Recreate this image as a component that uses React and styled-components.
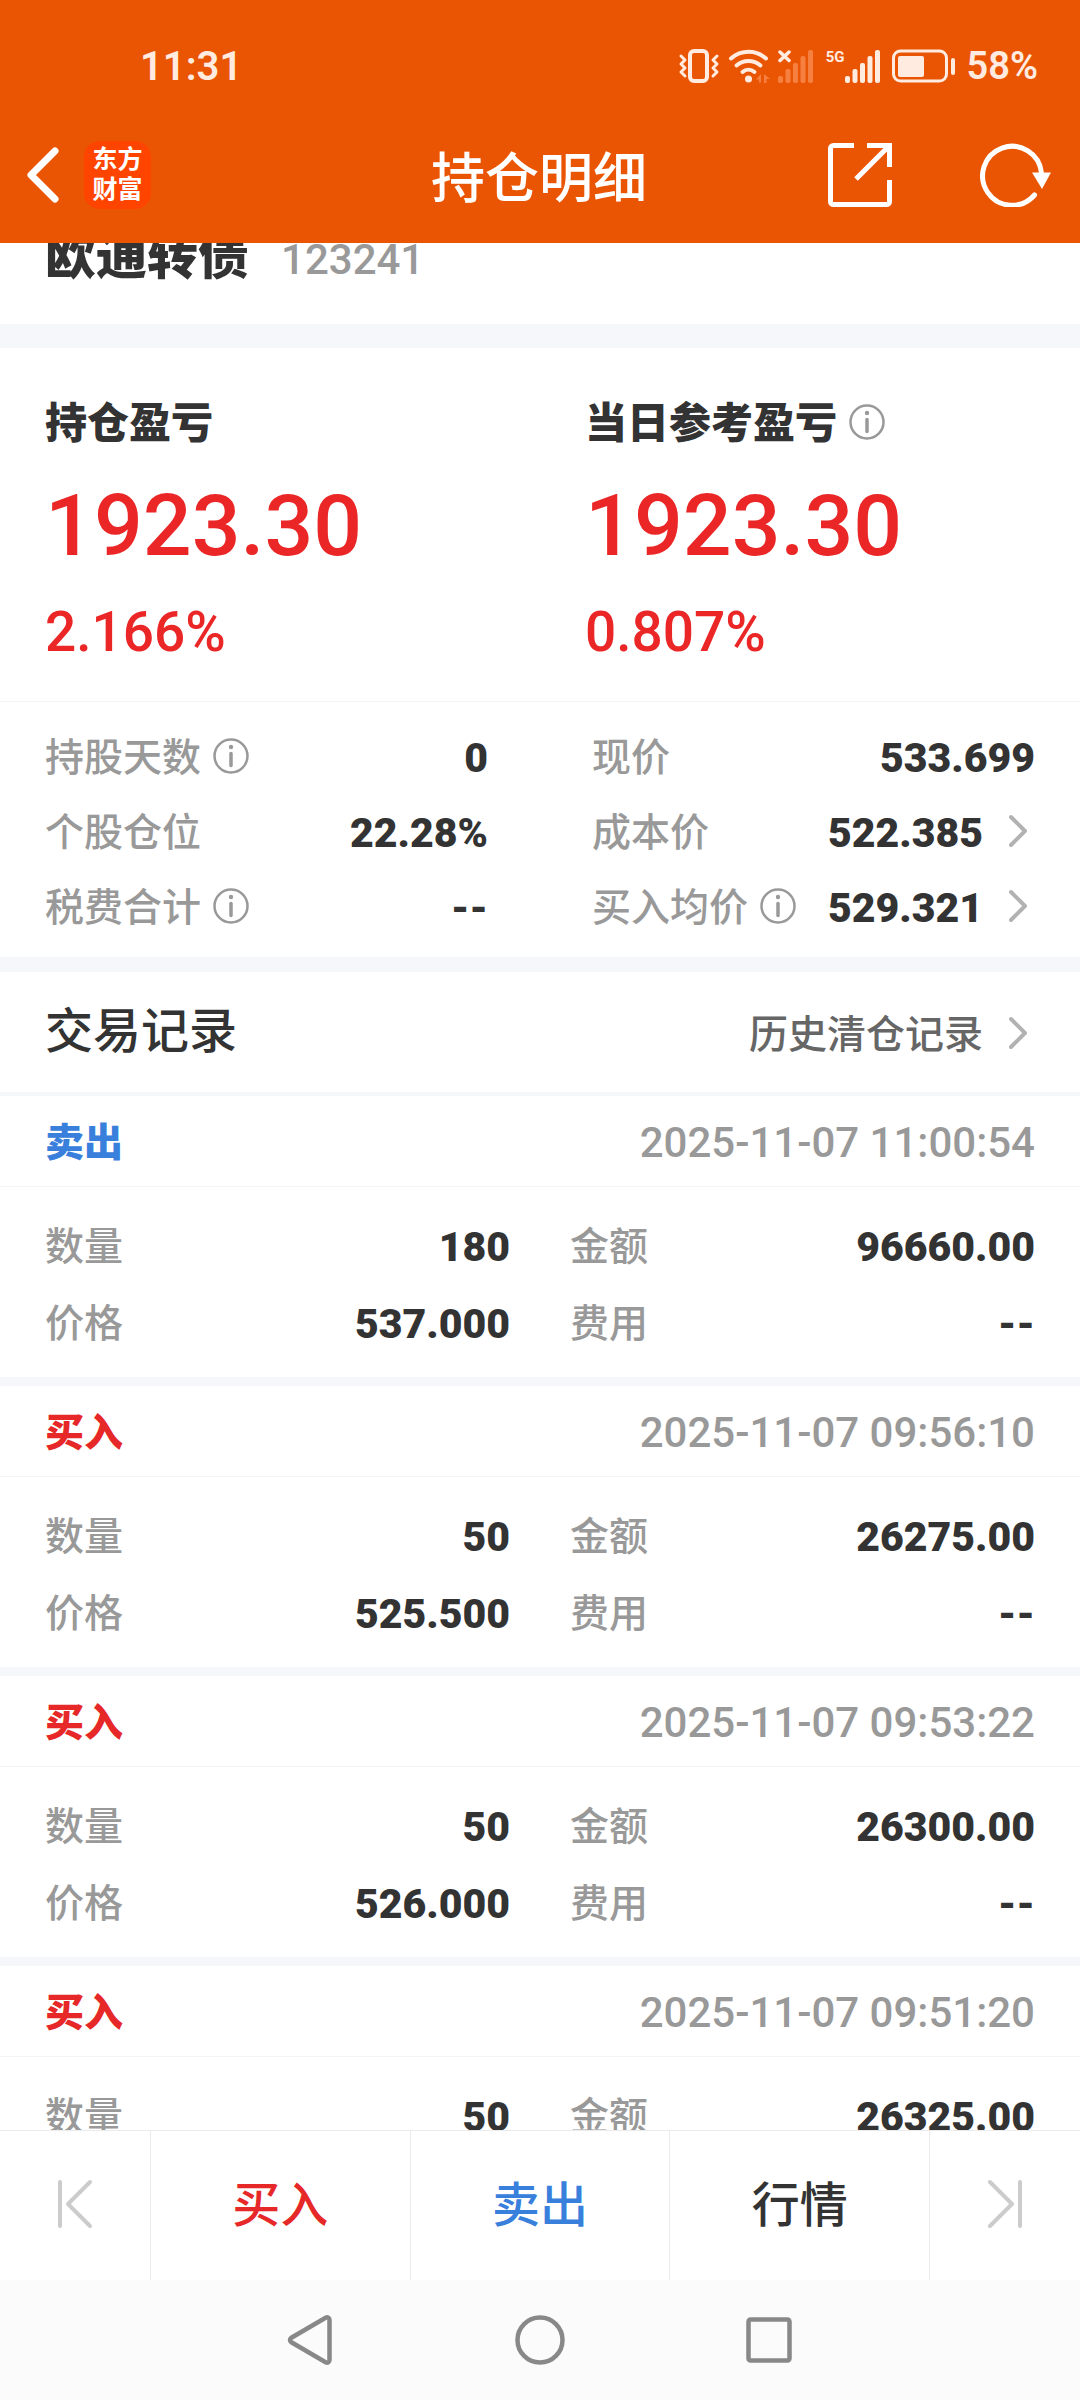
import React, { useLayoutEffect, useRef } from "react";
import styled, { createGlobalStyle } from "styled-components";

const records = [
  {
    side: "sell",
    time: "2025-11-07 11:00:54",
    count: "180",
    price: "537.000",
    amount: "96660.00",
    fee: "--",
  },
  {
    side: "buy",
    time: "2025-11-07 09:56:10",
    count: "50",
    price: "525.500",
    amount: "26275.00",
    fee: "--",
  },
  {
    side: "buy",
    time: "2025-11-07 09:53:22",
    count: "50",
    price: "526.000",
    amount: "26300.00",
    fee: "--",
  },
  {
    side: "buy",
    time: "2025-11-07 09:51:20",
    count: "50",
    price: "526.500",
    amount: "26325.00",
    fee: "--",
  },
];

function VibrateIcon() {
  return (
    <svg width="42" height="34" viewBox="0 0 42 34" fill="none" stroke="currentColor">
      <rect x="12" y="2" width="17" height="30" rx="4" strokeWidth="4" />
      <path d="M3 7l4 4-4 4 4 4-4 4 4 4" strokeWidth="3" strokeLinejoin="round" strokeLinecap="round" />
      <path d="M39 7l-4 4 4 4-4 4 4 4-4 4" strokeWidth="3" strokeLinejoin="round" strokeLinecap="round" />
    </svg>
  );
}

function WifiIcon() {
  return (
    <svg width="42" height="34" viewBox="0 0 42 34" fill="none" stroke="currentColor">
      <g strokeWidth="4" strokeLinecap="round">
        <path d="M3 9.500C13 .5 28 .5 38 9.500" />
        <path d="M8.500 16.500C15.500 10.500 25.500 10.500 32.500 16.500" />
        <path d="M14.500 23C18 20 23 20 26.500 23" />
      </g>
      <circle cx="20.500" cy="30" r="3.500" fill="currentColor" stroke="none" />
      <path d="M28 30.500l5-5.500v8.500h-2v-3zM36 25l6 5h-3.500v4H36z" fill="#f5803f" stroke="none" />
    </svg>
  );
}

function SignalBars() {
  return (
    <>
      <rect x="0" y="27" width="5" height="7" rx="2" />
      <rect x="7.500" y="20" width="5" height="14" rx="2" />
      <rect x="15" y="14" width="5" height="20" rx="2" />
      <rect x="22.500" y="7" width="5" height="27" rx="2" />
      <rect x="30" y="1" width="5" height="33" rx="2" />
    </>
  );
}

function NoSignalIcon() {
  return (
    <svg width="36" height="34" viewBox="0 0 36 34">
      <g fill="#f5803f">
        <SignalBars />
      </g>
      <path d="M2 3l9 8.500M11 3l-9 8.500" stroke="currentColor" strokeWidth="3.500" strokeLinecap="round" />
    </svg>
  );
}

function BatteryIcon() {
  return (
    <svg width="63" height="34" viewBox="0 0 63 34" fill="none">
      <rect x="1.500" y="2" width="53" height="30" rx="7" stroke="currentColor" strokeWidth="3" />
      <rect x="6" y="7" width="26" height="21" rx="2" fill="currentColor" />
      <rect x="59" y="9" width="4" height="17" rx="2" fill="currentColor" />
    </svg>
  );
}

function InfoButton({ label }) {
  return (
    <InfoWrapper type="button" aria-label={label}>
      <svg width="36" height="36" viewBox="0 0 36 36" fill="none" stroke="currentColor">
        <circle cx="18" cy="18" r="16.500" strokeWidth="2.500" />
        <path d="M18 15.500v12" strokeWidth="3.500" strokeLinecap="round" />
        <circle cx="18" cy="9" r="2.200" fill="currentColor" stroke="none" />
      </svg>
    </InfoWrapper>
  );
}

function Chevron() {
  return (
    <ChevronSvg width="26" height="34" viewBox="0 0 26 34" fill="none">
      <path d="M2 3l14 14L2 31" stroke="#b2b2b2" strokeWidth="4" strokeLinecap="round" strokeLinejoin="round" />
    </ChevronSvg>
  );
}

function Stat({ label, value, info, link, height }) {
  return (
    <StatRow $height={height}>
      <StatLabel>
        {label}
        {info && <InfoButton label={`${label}说明`} />}
      </StatLabel>
      <StatValue>
        {link ? (
          <ValueButton type="button">
            {value}
            <Chevron />
          </ValueButton>
        ) : (
          value
        )}
      </StatValue>
    </StatRow>
  );
}

function Record({ record }) {
  return (
    <RecordCard>
      <RecordHead>
        <Side $side={record.side}>{record.side === "buy" ? "买入" : "卖出"}</Side>
        <RecordTime>{record.time}</RecordTime>
      </RecordHead>
      <RecordBody>
        <Stat label="数量" value={record.count} height={77} />
        <Stat label="金额" value={record.amount} height={77} />
        <Stat label="价格" value={record.price} height={77} />
        <Stat label="费用" value={record.fee} height={77} />
      </RecordBody>
    </RecordCard>
  );
}

function App() {
  const scroller = useRef();

  // the list opens slightly scrolled, with the name row half under the header
  useLayoutEffect(() => {
    scroller.current.scrollTop = 53;
  }, []);

  return (
    <Page>
      <GlobalStyle />
      <Header>
        <StatusBar>
          <Clock>11:31</Clock>
          <StatusIcons>
            <VibrateIcon />
            <WifiIcon />
            <NoSignalIcon />
            <Mobile>
              <Network>5G</Network>
              <svg width="35" height="34" viewBox="0 0 35 34" fill="currentColor">
                <SignalBars />
              </svg>
            </Mobile>
            <BatteryIcon />
            <Percent>58%</Percent>
          </StatusIcons>
        </StatusBar>
        <AppBar>
          <BarSide>
            <IconButton type="button" aria-label="返回">
              <svg width="34" height="56" viewBox="0 0 34 56" fill="none">
                <path d="M29 4L5 28l24 24" stroke="#fff" strokeWidth="7" strokeLinecap="round" strokeLinejoin="round" />
              </svg>
            </IconButton>
            <Logo>
              东方
              <br />
              财富
            </Logo>
          </BarSide>
          <Title>持仓明细</Title>
          <BarActions>
            <IconButton type="button" aria-label="分享">
              <svg width="64" height="64" viewBox="0 0 64 64" fill="none" stroke="#fff" strokeWidth="5">
                <path d="M26 2.500H5.500a3 3 0 0 0-3 3v53a3 3 0 0 0 3 3h53a3 3 0 0 0 3-3V37" />
                <path d="M39 2.500h22.500V24M61 3L28 36" />
              </svg>
            </IconButton>
            <IconButton type="button" aria-label="刷新">
              <svg width="72" height="64" viewBox="0 0 72 64" fill="none">
                <path
                  d="M54.500 52A29.500 29.500 0 1 1 61.500 30"
                  stroke="#fff"
                  strokeWidth="5"
                  strokeLinecap="round"
                />
                <path d="M52 29.500h19L62 46z" fill="#fff" />
              </svg>
            </IconButton>
          </BarActions>
        </AppBar>
      </Header>

      <Scroller ref={scroller}>
        <NameRow>
          <StockName>欧通转债</StockName>
          <StockCode>123241</StockCode>
        </NameRow>
        <Band $size={24} />
        <ProfitGrid>
          <Profit>
            <ProfitTitle>持仓盈亏</ProfitTitle>
            <ProfitValue>1923.30</ProfitValue>
            <ProfitRate>2.166%</ProfitRate>
          </Profit>
          <Profit>
            <ProfitTitle>
              当日参考盈亏
              <InfoButton label="当日参考盈亏说明" />
            </ProfitTitle>
            <ProfitValue>1923.30</ProfitValue>
            <ProfitRate>0.807%</ProfitRate>
          </Profit>
        </ProfitGrid>
        <StatGrid>
          <Stat label="持股天数" value="0" height={75} info />
          <Stat label="现价" value="533.699" height={75} />
          <Stat label="个股仓位" value="22.28%" height={75} />
          <Stat label="成本价" value="522.385" height={75} link />
          <Stat label="税费合计" value="--" height={75} info />
          <Stat label="买入均价" value="529.321" height={75} info link />
        </StatGrid>
        <Band $size={15} />
        <SectionHead>
          <SectionTitle>交易记录</SectionTitle>
          <HistoryLink href="#history">
            历史清仓记录
            <Chevron />
          </HistoryLink>
        </SectionHead>
        <Band $size={4} />
        {records.map((record) => (
          <Record key={record.time} record={record} />
        ))}
      </Scroller>

      <TabBar>
        <TabEdge type="button" aria-label="上一个">
          <svg width="36" height="50" viewBox="0 0 36 50" fill="none" stroke="#ccc" strokeWidth="4" strokeLinecap="round" strokeLinejoin="round">
            <path d="M3 3v44M33 3L11 25l22 22" />
          </svg>
        </TabEdge>
        <Tab type="button" $color="#e62828">
          买入
        </Tab>
        <Tab type="button" $color="#3880dc">
          卖出
        </Tab>
        <Tab type="button" $color="#333">
          行情
        </Tab>
        <TabEdge type="button" aria-label="下一个">
          <svg width="36" height="50" viewBox="0 0 36 50" fill="none" stroke="#ccc" strokeWidth="4" strokeLinecap="round" strokeLinejoin="round">
            <path d="M33 3v44M3 3l22 22L3 47" />
          </svg>
        </TabEdge>
      </TabBar>

      <SystemNav>
        <IconButton type="button" aria-label="系统返回">
          <svg width="50" height="52" viewBox="0 0 50 52" fill="none" stroke="#888" strokeWidth="4.500">
            <path d="M41 3.500a2.500 2.500 0 0 1 3.500 2.500v40a2.500 2.500 0 0 1-3.500 2.500L6 28a2.500 2.500 0 0 1 0-4z" />
          </svg>
        </IconButton>
        <IconButton type="button" aria-label="主屏幕">
          <svg width="50" height="52" viewBox="0 0 50 52" fill="none" stroke="#888" strokeWidth="4.500">
            <circle cx="25" cy="26" r="22.500" />
          </svg>
        </IconButton>
        <IconButton type="button" aria-label="最近任务">
          <svg width="50" height="52" viewBox="0 0 50 52" fill="none" stroke="#888" strokeWidth="4.500">
            <rect x="3.500" y="5.500" width="41" height="41" rx="2" />
          </svg>
        </IconButton>
      </SystemNav>
    </Page>
  );
}

export default App;

const GlobalStyle = createGlobalStyle`
  * {
    box-sizing: border-box;
  }
  body {
    margin: 0;
    background-color: #fff;
    color: #333;
    font-family: Roboto, "Noto Sans CJK SC", sans-serif;
  }
  h1, h2, h3, p, dl, dt, dd {
    margin: 0;
    font-weight: inherit;
  }
  button {
    border: none;
    padding: 0;
    background: none;
    color: inherit;
    font: inherit;
    cursor: pointer;
  }
  svg {
    display: block;
    flex: none;
  }
`;

const Page = styled.div`
  display: flex;
  flex-direction: column;
  height: 100vh;
`;

const Header = styled.header`
  flex: none;
  background-color: #ea5504;
  color: #fff;
`;

const StatusBar = styled.div`
  display: flex;
  align-items: center;
  justify-content: space-between;
  height: 110px;
  padding: 22px 42px 0 140px;
  color: #ffebe0;
  font-weight: 600;
`;

const Clock = styled.span`
  font-size: 40px;
`;

const StatusIcons = styled.div`
  display: flex;
  align-items: center;
  gap: 8px;
`;

const Mobile = styled.div`
  display: flex;
  align-items: flex-start;
  padding: 0 4px;
`;

const Network = styled.span`
  font-size: 15px;
  line-height: 16px;
  font-weight: 700;
`;

const Percent = styled.span`
  padding-left: 4px;
  font-size: 38px;
`;

const AppBar = styled.div`
  display: grid;
  grid-template-columns: 1fr auto 1fr;
  align-items: center;
  height: 133px;
  padding: 0 28px 4px 26px;
`;

const BarSide = styled.div`
  display: flex;
  align-items: center;
  gap: 24px;
`;

const BarActions = styled.div`
  display: flex;
  justify-content: flex-end;
  gap: 88px;
`;

const IconButton = styled.button`
  flex: none;
`;

const Logo = styled.div`
  width: 67px;
  padding: 4px 0;
  border-radius: 16px;
  background-color: #ff4400;
  font-size: 25px;
  line-height: 30px;
  font-weight: 700;
  text-align: center;
`;

const Title = styled.h1`
  font-size: 54px;
  font-weight: 500;
`;

const Scroller = styled.main`
  flex: 1;
  min-height: 0;
  overflow-y: auto;
  scrollbar-width: none;
`;

const NameRow = styled.div`
  display: flex;
  align-items: baseline;
  gap: 32px;
  height: 134px;
  padding: 35px 45px;
  line-height: 64px;
`;

const StockName = styled.h2`
  font-size: 51px;
  font-weight: 900;
`;

const StockCode = styled.span`
  color: #999;
  font-size: 42px;
  font-weight: 500;
`;

const Band = styled.div`
  height: ${(props) => props.$size}px;
  background-color: #f6f7fa;
`;

const ProfitGrid = styled.section`
  display: grid;
  grid-template-columns: 1fr 1fr;
  border-bottom: 1px solid #f4f4f4;
`;

const Profit = styled.div`
  padding: 46px 0 39px 45px;
  color: #eb2626;
`;

const ProfitTitle = styled.h3`
  display: flex;
  align-items: center;
  color: #333;
  font-size: 42px;
  line-height: 60px;
  font-weight: 900;
`;

const ProfitValue = styled.p`
  margin-top: 20px;
  font-size: 86px;
  line-height: 104px;
  font-weight: 500;
`;

const ProfitRate = styled.p`
  margin-top: 24px;
  font-size: 55px;
  line-height: 60px;
  font-weight: 500;
`;

const InfoWrapper = styled.button`
  margin: 0 0 4px 12px;
  color: #999;
`;

const ChevronSvg = styled.svg`
  margin: 0 0 4px 26px;
`;

const StatGrid = styled.dl`
  display: grid;
  grid-template-columns: 1fr 1fr;
  column-gap: 104px;
  padding: 18px 45px 12px;
`;

const StatRow = styled.div`
  display: flex;
  align-items: center;
  justify-content: space-between;
  height: ${(props) => props.$height}px;
  line-height: 60px;
`;

const StatLabel = styled.dt`
  display: flex;
  align-items: center;
  color: #999;
  font-size: 39px;
  font-weight: 500;
`;

const StatValue = styled.dd`
  font-size: 41px;
  font-weight: 900;
`;

const ValueButton = styled.button`
  display: flex;
  align-items: center;
`;

const SectionHead = styled.div`
  display: flex;
  align-items: baseline;
  justify-content: space-between;
  height: 120px;
  padding: 0 45px;
  line-height: 120px;
`;

const SectionTitle = styled.h2`
  font-size: 48px;
  font-weight: 500;
`;

const HistoryLink = styled.a`
  display: flex;
  align-items: center;
  height: 120px;
  color: #666;
  font-size: 39px;
  font-weight: 500;
  text-decoration: none;
`;

const RecordCard = styled.article`
  border-bottom: 9px solid #f6f7fa;
`;

const RecordHead = styled.div`
  display: flex;
  align-items: center;
  justify-content: space-between;
  height: 91px;
  padding: 4px 45px 0;
  border-bottom: 1px solid #f4f4f4;
  line-height: 60px;
`;

const Side = styled.h3`
  color: ${(props) => (props.$side === "buy" ? "#e62828" : "#3880dc")};
  font-size: 39px;
  font-weight: 900;
`;

const RecordTime = styled.time`
  color: #999;
  font-size: 42px;
  font-weight: 500;
`;

const RecordBody = styled.dl`
  display: grid;
  grid-template-columns: 1fr 1fr;
  column-gap: 60px;
  padding: 21px 45px 15px;
`;

const TabBar = styled.nav`
  display: flex;
  flex: none;
  height: 150px;
  border-top: 1px solid #ebebeb;
`;

const TabEdge = styled.button`
  display: flex;
  align-items: center;
  justify-content: center;
  width: 150px;
  padding-bottom: 4px;
`;

const Tab = styled.button`
  flex: 1;
  border-left: 1px solid #ebebeb;
  color: ${(props) => props.$color};
  font-size: 48px;
  font-weight: 500;
  line-height: 60px;

  &:nth-child(4) {
    border-right: 1px solid #ebebeb;
  }
`;

const SystemNav = styled.footer`
  display: flex;
  flex: none;
  align-items: center;
  justify-content: center;
  gap: 180px;
  height: 120px;
  background-color: #fbfbfb;
`;
